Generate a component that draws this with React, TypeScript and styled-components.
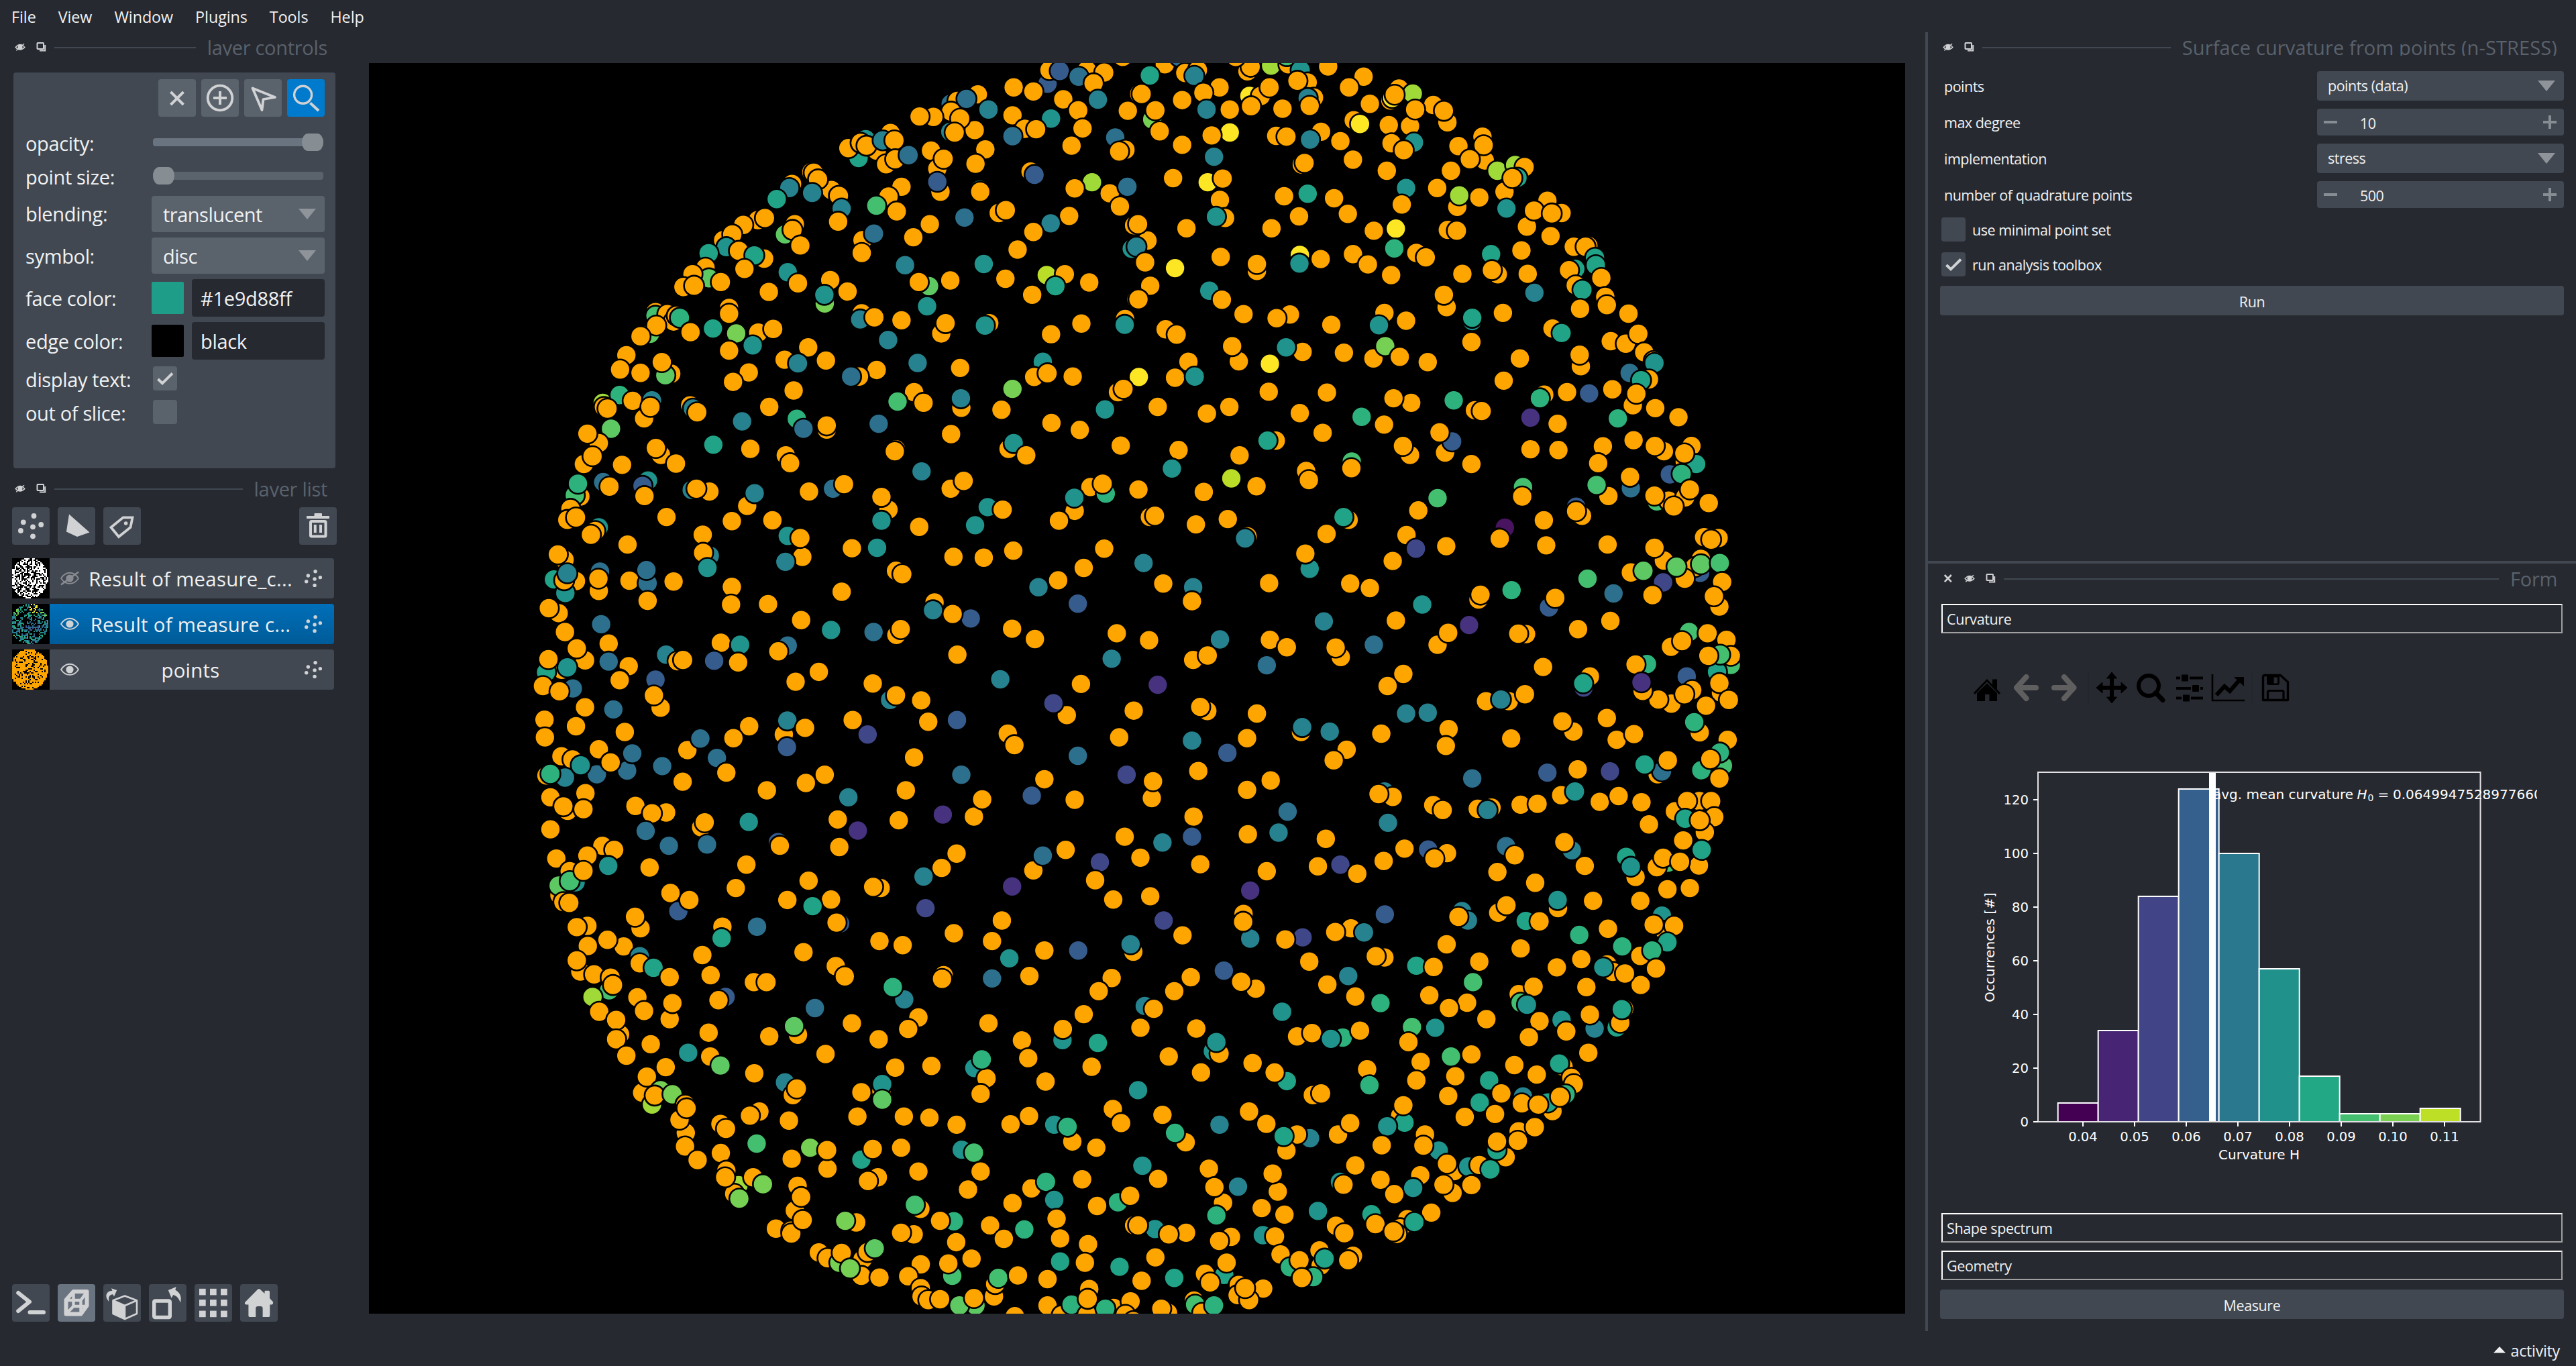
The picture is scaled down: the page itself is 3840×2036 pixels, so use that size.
import React from 'react';
import styled, { createGlobalStyle } from 'styled-components';

const color = {
  background: '#262930',
  foreground: '#414851',
  primary: '#5a626c',
  highlight: '#6a7380',
  secondary: '#868e93',
  text: '#f0f1f2',
  icon: '#d1d2d4',
  current: '#007acc',
};

const GlobalStyle = createGlobalStyle`
  * { box-sizing: border-box; }
  html, body { margin: 0; padding: 0; background: ${color.background}; }
  body { font-family: 'Open Sans', 'Noto Sans', sans-serif; color: ${color.text}; }
  svg { display: block; flex: none; }
`;

/* ---------- window frame ---------- */

const Window = styled.div`
  width: 3840px;
  height: 2036px;
  display: flex;
  flex-direction: column;
  background: ${color.background};
  overflow: hidden;
`;

const MenuBar = styled.nav`
  height: 48px;
  flex: none;
  display: flex;
  align-items: center;
  gap: 33px;
  padding: 2px 0 0 17px;
  font-size: 23.3px;
  letter-spacing: -0.05px;
  line-height: 30px;
`;

const Body = styled.div`
  height: 1936px;
  flex: none;
  display: flex;
`;

const StatusBar = styled.footer`
  flex: 1;
  display: flex;
  justify-content: flex-end;
  align-items: center;
  gap: 8px;
  padding: 6px 24px 0 0;
  font-size: 23.3px;
  letter-spacing: -0.3px;
  line-height: 30px;
`;

const LeftDock = styled.aside`
  width: 550px;
  flex: none;
  display: flex;
  flex-direction: column;
`;

const CanvasArea = styled.main`
  width: 2320px;
  flex: none;
  padding: 46px 30px 26px 0;
`;

const Canvas = styled.div`
  width: 2290px;
  height: 1864px;
  background: #000;
  overflow: hidden;
`;

const RightDock = styled.aside`
  flex: 1;
  border-left: 4px solid ${color.foreground};
  display: flex;
  flex-direction: column;
`;

/* ---------- dock title ---------- */

const TitleBar = styled.div<{ $top: number; $left: number; $right: number }>`
  flex: none;
  height: 24px;
  margin: ${(p) => p.$top}px ${(p) => p.$right}px 0 ${(p) => p.$left}px;
  display: flex;
  align-items: flex-start;
  overflow: hidden;
`;

const TitleIcon = styled.span`
  width: 32px;
  flex: none;
  padding-top: 1px;
`;

const TitleLine = styled.span`
  flex: 1;
  height: 2px;
  margin: 11px 17px 0 -5px;
  background: ${color.foreground};
`;

const TitleText = styled.span<{ $spacing?: number }>`
  font-size: 29px;
  line-height: 40px;
  letter-spacing: ${(p) => p.$spacing ?? -0.3}px;
  margin-top: -8px;
  color: ${color.primary};
  white-space: nowrap;
`;

/* ---------- layer controls ---------- */

const ControlsPanel = styled.section`
  width: 480px;
  height: 590px;
  flex: none;
  margin: 25px 0 0 20px;
  padding: 10px 16px 0 18px;
  border-radius: 4px;
  background: ${color.foreground};
`;

const ModeButtons = styled.div`
  display: flex;
  justify-content: flex-end;
  gap: 8px;
  margin-bottom: 12px;
`;

const IconButton = styled.button<{ $bg?: string }>`
  width: 56px;
  height: 56px;
  padding: 0;
  border: 0;
  border-radius: 4px;
  background: ${(p) => p.$bg ?? color.foreground};
`;

const ControlRow = styled.div<{ $h: number; $gap?: number }>`
  height: ${(p) => p.$h}px;
  margin-top: ${(p) => p.$gap ?? 0}px;
  display: flex;
  align-items: center;
`;

const ControlLabel = styled.label<{ $drop?: number }>`
  width: 188px;
  flex: none;
  padding-top: ${(p) => p.$drop ?? 0}px;
  font-size: 29px;
  line-height: 40px;
  letter-spacing: -0.35px;
  white-space: nowrap;
`;

const Track = styled.div<{ $filled?: boolean }>`
  width: 254px;
  height: 12px;
  margin-left: 2px;
  border-radius: 4px;
  display: flex;
  align-items: center;
  justify-content: ${(p) => (p.$filled ? 'flex-end' : 'flex-start')};
  background: ${(p) => (p.$filled ? color.highlight : color.primary)};
`;

const Handle = styled.span`
  width: 32px;
  height: 26px;
  flex: none;
  border-radius: 9px / 13px;
  background: ${color.secondary};
`;

const Combo = styled.div<{ $small?: boolean }>`
  width: ${(p) => (p.$small ? 368 : 258)}px;
  height: ${(p) => (p.$small ? 44 : 54)}px;
  flex: none;
  padding: ${(p) => (p.$small ? '0 13px 0 16px' : '0 13px 0 17px')};
  display: flex;
  align-items: center;
  justify-content: space-between;
  border-radius: 4px;
  background: ${(p) => (p.$small ? color.foreground : color.primary)};
  font-size: ${(p) => (p.$small ? 21.5 : 29)}px;
  letter-spacing: -0.5px;
`;

const Swatch = styled.span<{ $fill: string }>`
  width: 48px;
  height: 48px;
  flex: none;
  border-radius: 2px;
  background: ${(p) => p.$fill};
`;

const ColorInput = styled.div`
  width: 198px;
  height: 56px;
  margin-left: 12px;
  padding-left: 13px;
  border-radius: 4px;
  background: ${color.background};
  font-size: 29px;
  line-height: 57px;
  letter-spacing: -0.3px;
`;

const CheckBox = styled.span<{ $bg: string; $indent?: number }>`
  width: 36px;
  height: 36px;
  flex: none;
  margin-left: ${(p) => p.$indent ?? 0}px;
  border-radius: 4px;
  background: ${(p) => p.$bg};
`;

/* ---------- layer list ---------- */

const ListButtons = styled.div`
  display: flex;
  gap: 12px;
  margin: 15px 0 0 18px;
  width: 484px;
`;

const Spacer = styled.span`
  flex: 1;
`;

const LayerList = styled.ul`
  list-style: none;
  margin: 20px 0 0 18px;
  padding: 0;
  width: 480px;
  flex: 1;
`;

const LayerRow = styled.li<{ $selected?: boolean }>`
  height: 60px;
  margin-bottom: 8px;
  display: flex;
  align-items: center;
  border-radius: 0 4px 4px 0;
  background: ${(p) => (p.$selected ? 'linear-gradient(#006fb9, #005b98)' : color.foreground)};
`;

const LayerEye = styled.span<{ $dim?: boolean }>`
  width: 60px;
  flex: none;
  padding-left: 16px;
  opacity: ${(p) => (p.$dim ? 0.5 : 1)};
`;

const LayerName = styled.span`
  width: 300px;
  flex: none;
  display: flex;
  justify-content: center;
  font-size: 29.3px;
  line-height: 40px;
  letter-spacing: 0.3px;
  padding-top: 2px;
  margin-right: 2px;
  white-space: nowrap;
`;

const LayerType = styled.span`
  padding-left: 18px;
`;

const ViewerButtons = styled.div`
  display: flex;
  gap: 12px;
  margin: 0 0 14px 18px;
`;

/* ---------- right dock ---------- */

const FormPanel = styled.section`
  height: 753px;
  flex: none;
  padding: 23px 18px 0 18px;
`;

const FormRow = styled.div<{ $h: number; $after?: number }>`
  height: ${(p) => p.$h}px;
  margin-bottom: ${(p) => p.$after ?? 12}px;
  display: flex;
  align-items: center;
  justify-content: space-between;
  padding-left: 6px;
  font-size: 21.5px;
  letter-spacing: -0.5px;
  line-height: 30px;
`;

const FormLabel = styled.label`
  padding-top: 2px;
`;

const CheckRow = styled.label<{ $gap: number }>`
  height: 36px;
  margin-bottom: ${(p) => p.$gap}px;
  padding-left: 2px;
  display: flex;
  align-items: center;
  gap: 10px;
  font-size: 21.5px;
  letter-spacing: -0.45px;
`;

const SpinBox = styled.div`
  width: 368px;
  height: 40px;
  display: flex;
  align-items: center;
  padding: 0 11px 0 10px;
  border-radius: 4px;
  background: ${color.foreground};
`;

const SpinValue = styled.span`
  flex: 1;
  padding: 3px 0 0 34px;
`;

const WideButton = styled.button`
  display: block;
  width: 930px;
  height: 44px;
  padding: 2px 0 0;
  border: 0;
  border-radius: 4px;
  background: ${color.foreground};
  color: ${color.text};
  font: inherit;
  font-size: 21.5px;
  letter-spacing: -0.4px;
`;

const Divider = styled.hr`
  height: 4px;
  flex: none;
  margin: 0;
  border: 0;
  background: ${color.foreground};
`;

const MeasurePanel = styled.section`
  flex: 1;
  display: flex;
  flex-direction: column;
  padding: 25px 18px 0 18px;
`;

const Section = styled.div<{ $after: number }>`
  width: 926px;
  height: 44px;
  flex: none;
  margin: 0 0 ${(p) => p.$after}px 2px;
  padding-left: 6px;
  border: 2px solid;
  border-color: #fff #a0a0a0 #a0a0a0 #fff;
  font-size: 21.5px;
  letter-spacing: -0.4px;
  line-height: 42px;
`;

const PlotTools = styled.div`
  height: 56px;
  flex: none;
  margin: 53px 0 0 42px;
  display: flex;
  gap: 2px;
`;

const ToolSeparator = styled.span`
  width: 2px;
  height: 46px;
  margin: 5px 4px;
  background: #23262c;
`;

const Plot = styled.div`
  height: 755px;
  flex: none;
`;

/* ---------- icons ---------- */

const Box = ({ children }: { children: React.ReactNode }) => (
  <svg width="56" height="56" viewBox="0 0 56 56" fill="none" stroke={color.icon}>
    {children}
  </svg>
);

const HideIcon = () => (
  <svg width="16" height="20" viewBox="0 0 16 20" fill="none" stroke={color.icon} strokeWidth="1.5">
    <path d="M1.2 10.5Q8 2.5 14.8 10.5Q8 17.5 1.2 10.5Z" />
    <circle cx="8" cy="10.3" r="2.8" fill={color.icon} />
    <path d="M2.2 15.2L14 5.2" />
  </svg>
);

const FloatIcon = () => (
  <svg width="16" height="20" viewBox="0 0 16 20" fill="none" stroke={color.icon} strokeWidth="2">
    <rect x="1.5" y="4" width="9.5" height="9" rx="0.8" />
    <path d="M13.2 7V15.6H5" />
  </svg>
);

const CloseIcon = () => (
  <svg width="16" height="20" viewBox="0 0 16 20" fill="none" stroke={color.icon} strokeWidth="2.6">
    <path d="M2.8 5L12.8 15.2M12.8 5L2.8 15.2" />
  </svg>
);

const EyeIcon = ({ slashed }: { slashed?: boolean }) => (
  <svg width="28" height="24" viewBox="0 0 28 24" fill="none" stroke={color.icon} strokeWidth="1.8">
    <path d="M1 12C8 1 20 1 27 12C20 22.6 8 22.6 1 12Z" />
    <circle cx="14" cy="12" r="5.6" fill={color.icon} stroke="none" />
    {slashed && <path d="M1 21.5L27 2.5" strokeWidth="2.6" />}
  </svg>
);

const pointDots = [
  [32.5, 13], [16.8, 22.3], [43.2, 26], [31, 29.3], [12.9, 35], [31, 43.3],
];

const PointsIcon = ({ size = 56 }: { size?: number }) => (
  <svg width={size} height={size} viewBox={size === 56 ? '0 0 56 56' : '9 9 38 38'} fill={color.icon}>
    {pointDots.map(([x, y]) => (
      <circle key={`${x}-${y}`} cx={x} cy={y} r={size === 56 ? 3.9 : 4} />
    ))}
  </svg>
);

const Caret = () => (
  <svg width="26" height="16" viewBox="0 0 26 16" fill="#8f949b">
    <path d="M0 0H26L13 16Z" />
  </svg>
);

const CheckIcon = () => (
  <svg width="36" height="36" viewBox="0 0 36 36" fill="none" stroke={color.icon} strokeWidth="4">
    <path d="M7.5 19L14 25.3L29 10.5" strokeLinejoin="miter" />
  </svg>
);

/* ---------- layer thumbnails ---------- */

const noise = (x: number, y: number, seed: number) => {
  let h = Math.imul(x + 11, 374761393) ^ Math.imul(y + 7, 668265263) ^ Math.imul(seed, 974634721);
  h = Math.imul(h ^ (h >>> 13), 1274126177);
  h = Math.imul(h ^ (h >>> 16), 2246822519);
  return ((h ^ (h >>> 15)) >>> 0) / 4294967296;
};

const coolTones = ['#2c728e', '#21918c', '#28ae80', '#20a386', '#26828e', '#33638d'];

function thumbTone(kind: string, x: number, y: number) {
  if (kind === 'white') return '#fff';
  if (kind === 'orange') return '#ffa500';
  const r = noise(x, y, 9);
  if (y < 8 && x > 12 && x < 19 && r > 0.4) return '#fde725';
  if ((x < 5 || x > 20) && (y < 9 || y > 22) && r > 0.5) return '#7ad151';
  if (y > 12 && y < 20 && x > 7 && x < 20) return r > 0.5 ? '#3b528b' : '#2c728e';
  return coolTones[Math.floor(r * coolTones.length)];
}

const Thumbnail = ({ kind, density, seed }: { kind: string; density: number; seed: number }) => {
  const cells: React.ReactNode[] = [];
  for (let y = 0; y < 30; y += 1) {
    for (let x = 0; x < 28; x += 1) {
      const d = Math.hypot((x - 12.3) / 14, (y - 14.3) / 15);
      const keep = density + (d > 0.8 ? 0.15 : 0);
      if (d < 1 && noise(x, y, seed) < keep) {
        cells.push(
          <rect key={`${x}-${y}`} x={x} y={y} width="1" height="1" fill={thumbTone(kind, x, y)} />,
        );
      }
    }
  }
  return (
    <svg width="56" height="60" viewBox="0 0 28 30" preserveAspectRatio="none" shapeRendering="crispEdges">
      <rect width="28" height="30" fill="#000" />
      {cells}
    </svg>
  );
};

/* ---------- point cloud ---------- */

const tones: Record<string, string> = {
  '0': '#48145f', '1': '#46327e', '2': '#3f4788', '3': '#365c8d', '4': '#2d708e',
  '5': '#26828e', '6': '#20938c', '7': '#20a386', '8': '#2db27d', '9': '#44bf70',
  a: '#5ec962', b: '#75d054', c: '#a0da39', d: '#bade28', y: '#fde725', o: '#ffa500',
};

// Each block of the cloud keeps its own origin; entries are "x,y" plus a tone key,
// listed back to front.
const blocks: { x: number; y: number; data: string }[] = [
  {
    x: 780,
    y: 80,
    data: `1332,73 3 1337,40 o 1363,42 3 1432,40 o 1411,56 4 1476,46 o 1449,72 o 1523,8 o 1246,82 o 1296,92 o 1372,111 o 1460,112 5
1565,98 o 1536,139 o 1410,138 o 1341,158 6 1421,182 o 1393,224 o 1243,150 o 1274,183 o 1303,184 o 1243,201 4 1504,204 4 1530,234 o 1514,238 o
1086,122 4 1103,115 o 1155,99 o 1126,110 4 1182,136 5 1087,141 o 1085,190 5 1147,186 o 1110,158 o 1096,192 o 1042,154 o 1007,153 o 1174,233 o 1036,236 o
1052,280 o 1068,256 o 1149,268 o 1060,336 o 1052,312 3 870,208 6 852,254 7 933,193 o 898,236 o 826,230 o 857,217 o 872,224 o 913,211 5 943,211 o
922,269 o 945,257 o 979,247 4 1289,287 o 1299,295 3 1160,331 6 1161,336 o 1445,313 c 1401,328 o 1490,340 o 1535,324 4 1516,372 o
961,324 o 928,348 o 949,384 o 897,370 9 1033,415 o 991,447 o 1121,399 4 1208,388 o 1226,381 o 1387,395 o 1340,413 5 1296,434 o 1256,477 o 1552,418 o 1546,475 6 1580,508 o
732,288 o 738,290 o 783,332 o 749,306 o 683,317 o 676,327 5 644,354 7 734,339 5 802,346 o 809,377 5 800,409 o 596,405 o 614,400 o 559,417 o 508,454 o 531,440 o
516,471 6 471,486 7 665,440 a 690,415 o 684,429 o 704,467 o 548,480 o 612,499 o 587,491 7 562,524 o 862,454 o 860,485 o 891,438 4
463,521 o 472,547 a 502,556 o 430,537 o 407,568 o 434,565 o 672,532 6 698,559 o 624,580 o 780,551 o 766,608 b 765,587 6 824,579 o
970,515 5 1170,512 6 1031,566 a 1005,556 o 1085,552 o 1225,548 o 1330,539 d 1376,537 o 1352,566 7 1438,557 o 1293,587 o 1026,615 6 1558,598 o
860,632 o 856,647 5 892,642 o 961,649 o 1062,681 o 1073,656 o 927,697 5 1184,656 o 1173,662 6 1418,657 o 1529,646 o 1528,660 6 1341,683 o
336,629 o 336,638 9 366,634 o 382,652 o 390,638 o 398,643 8 322,682 a 338,662 o 298,688 o 425,678 o 523,619 o 523,633 o 482,669 7 597,679 o 541,681 b 635,670 o 583,710 6
523,723 o 724,715 o 664,745 o 698,754 5 769,747 o 262,734 o 246,769 o 298,777 o 376,779 o 361,783 a 352,751 o 573,776 o 533,799 o 687,820 o
1002,753 5 1110,765 o 898,770 o 853,786 o 833,786 4 1320,750 6 1298,787 o 1332,778 o 1396,786 o 1564,787 y 1511,824 o 1525,816 o 1243,816 b 1215,867 o
993,824 o 1017,850 o 951,847 9 1113,862 o 1112,839 5 1478,866 6 202,850 c 205,860 o 245,831 8 278,845 o 214,864 o 327,844 5 307,888 o 323,860 o
424,856 o 431,864 5 442,873 o 625,860 o 556,895 5 695,889 8 712,913 4 771,915 o 771,905 o 903,901 4 1087,926 o 1342,899 o 1414,916 o 223,913 a
192,948 o 163,925 o 154,999 o 176,980 o 251,1001 o 350,977 o 337,960 o 388,998 o 483,952 7 577,962 o 667,978 o 678,997 o 947,963 o 944,968 o
1233,962 o 1246,948 6 1278,978 o 1518,954 o 1012,1017 5 203,1043 4 219,1054 o 317,1039 6 303,1052 3 308,1077 o 145,1078 o 131,1075 9 139,1047 8
120,1108 o 112,1135 o 134,1129 o 192,1153 6 183,1162 o 172,1171 o 428,1062 5 473,1066 o 440,1059 o 569,1101 o 588,1070 5 726,1066 o 787,1059 4 815,1048 o
364,1128 o 530,1138 o 633,1136 o 928,1110 o 910,1079 o 910,1137 6 1086,1059 o 1119,1040 o 1006,1152 o 1180,1104 6 1218,1110 o 1148,1148 6 1441,1055 o
1480,1071 8 1472,1047 o 1401,1113 o 1400,1081 6 1361,1137 o 1563,1061 o 265,1195 o 474,1222 5 456,1171 o 457,1215 o 468,1252 6 672,1174 6 709,1225 o 704,1179 o
666,1237 5 835,1204 o 899,1203 6 1093,1225 o 1170,1227 o 1245,1210 o 1476,1205 o 1424,1252 o 105,1232 o 88,1219 o 78,1280 7 134,1284 o 107,1313 6 104,1282 o 112,1265 5
195,1261 4 192,1308 o 191,1278 o 270,1283 o 316,1289 4 313,1257 4 382,1285 o 316,1332 o 530,1298 o 528,1341 o 622,1340 o 947,1259 o 963,1267 o 809,1310 o
1359,1282 o 1309,1299 5 1409,1339 3 1576,1240 5 90,1362 o 65,1350 o 198,1389 4 106,1408 o 706,1379 o 782,1403 6 890,1408 4 948,1415 o 959,1401 o
1045,1336 o 1041,1355 5 1137,1375 3 1091,1364 o 1242,1400 o 1508,1411 o 1300,1425 o 217,1436 o 157,1477 o 136,1448 o 502,1434 o 551,1439 6 672,1441 4 648,1455 o
363,1463 5 392,1479 o 406,1476 o 485,1478 3 546,1482 o 1103,1463 o 1495,1473 5 217,1480 4 268,1491 o 244,1523 o 98,1500 o 58,1506 7 64,1474 o 112,1494 6
751,1505 o 692,1529 o 336,1524 3 1212,1523 5`,
  },
  {
    x: 1700,
    y: 80,
    data: `62,26 o 99,8 4 24,53 7 114,47 o 146,40 o 137,54 5 3,98 o 106,113 o 201,82 o 160,95 o 168,136 5 227,136 o 272,43 o 280,32 o 242,8 o 332,29 c
376,26 o 372,6 9 407,40 6 477,31 o 425,70 o 399,66 o 277,103 y 306,103 o 328,82 o 281,128 o 361,134 o 441,107 o 425,108 5 430,127 o 567,56 o 530,82 o 583,122 o
30,160 b 38,138 o 49,189 o 227,192 y 181,199 o 106,222 o 187,251 5 345,200 o 371,202 o 459,190 o 431,209 5 508,213 o 540,258 o 542,162 o 558,171 y
657,85 o 692,97 c 635,114 o 640,108 y 646,100 o 744,125 o 780,167 o 771,139 o 685,176 o 698,136 o 631,174 o 638,218 o 695,216 6 669,235 o 626,285 o
869,202 o 808,225 o 875,260 o 872,223 o 837,257 o 789,285 o 410,270 o 417,266 o 425,341 7 365,347 o 83,303 o 171,313 y 209,304 o 202,356 o 215,400 o 192,397 6
492,352 o 527,390 o 403,396 o 333,425 o 675,327 6 664,367 o 754,327 o 907,285 c 952,271 c 976,276 o 958,302 7 925,336 o 945,303 o 861,350 o 805,373 o 810,345 c
930,377 6 117,425 o 18,455 o -6,415 o -10,470 5 12,508 o 204,495 o 25,565 o -5,598 o 88,522 y 593,431 o 649,426 y 781,429 o 804,431 o 982,421 o 1034,358 o 1070,388 o 1000,382 o
1045,389 o 1042,444 o 968,479 o 645,474 8 701,485 o 725,496 o 540,488 o 578,513 o 405,490 y 404,511 6 458,500 o 296,529 o 296,512 o 637,539 o 818,536 o
891,488 7 908,537 o 893,527 o 984,536 o 1001,582 5 1101,470 o 1138,468 o 1131,470 o 1155,497 7 1157,515 7 1105,524 7 1089,527 o 1171,546 o 1106,564 o 1123,575 7
1181,592 o 1185,612 o 1117,621 o 1240,633 o 175,577 6 207,599 o 262,634 o 380,635 o 346,644 o 485,660 o 620,631 o 675,650 o 606,661 6 778,617 o 771,587 o
921,631 o 843,651 6 843,643 7 841,702 o 1047,669 o 1070,680 7 64,671 o 92,684 o 250,749 o 233,712 o 412,726 o 370,715 6 329,755 y 517,728 o 592,742 o 622,712 b 659,738 o
730,751 o 964,742 o 923,796 o 1119,761 o 1116,733 o 1195,700 o 1233,706 o 1265,682 o 1280,727 o 1304,748 o 1306,753 6 122,750 o 88,789 o 138,786 6 326,823 o 474,825 o
1243,777 4 1292,793 o 1272,795 7 1199,817 o 1140,827 3 1084,824 o 1026,830 o 1015,839 8 1251,856 o 1260,828 o 1308,863 o 1367,885 o 1213,888 8 688,850 o 643,839 o 796,844 8
44,860 o 226,860 o 169,876 o 405,875 o 562,884 8 619,903 o 850,868 o 867,870 o 991,886 1 1060,901 o 463,923 o 344,942 o 323,942 7 97,965 o 252,978 o 685,977 o 667,955 o
774,971 o 792,944 3 760,922 o 991,963 o 1062,965 o 1175,956 o 1253,941 o 1330,968 o 1307,955 o 1400,955 o 1383,993 o 1412,999 7 1382,973 o 1163,997 o 841,999 o
80,1010 6 231,1034 d 421,1016 o 428,1038 o 537,993 9 536,1009 o 295,1053 o 161,1067 o -5,1061 o 972,1055 9 970,1078 o 1189,1077 o 1159,1050 9 1246,1058 4 1244,1030 o
1345,1024 3 1375,1023 8 1312,1090 9 1342,1088 o 1384,1080 o 1396,1061 o 1306,1076 o 1355,1102 o 1444,1094 o 755,1082 9 706,1112 o 24,1128 o 37,1125 o 222,1133 o 141,1146 o
529,1135 o 516,1128 7 272,1175 o 266,1180 5 473,1169 o 1107,1103 3 1122,1125 o 1107,1114 o 1025,1136 o 926,1154 0 910,1180 o 913,1181 o 1031,1197 o 1187,1195 o
1432,1177 o 1469,1179 o 1450,1183 o 1330,1234 o 1306,1203 o 676,1172 o 700,1205 2 777,1199 o 641,1235 o 430,1254 6 419,1217 o 1246,1263 o 1278,1259 a 1424,1230 o 1422,1264 3 1408,1250 o
1424,1243 a 1383,1278 o 1362,1249 a 1472,1240 9 1478,1286 o 1136,1278 9 1328,1287 2 1471,1346 o 1457,1321 o 1301,1318 o 1202,1314 4 58,1290 o 134,1299 5 131,1333 o 327,1289 o
533,1290 o 583,1301 o 943,1306 8 859,1329 o 864,1317 o 716,1341 6 1038,1348 3 1054,1325 o 1194,1381 o 1112,1401 o 649,1380 o 466,1382 5 835,1391 1 755,1439 o 782,1410 o
980,1413 o 960,1412 o 593,1439 4 22,1428 o 202,1426 5 329,1427 o 372,1445 o 134,1476 o 171,1465 o 321,1489 4 509,1469 o 496,1446 o 1394,1408 9 1348,1444 o 1376,1430 o 1441,1411 o 1489,1427 o
1500,1488 9 1465,1505 7 1500,1466 o 1473,1463 9 1443,1466 o 1287,1486 8 1277,1546 o 1273,1530 1 1258,1487 o 1388,1516 3 1142,1516 o 1126,1543 2 1125,1533 7 1023,1493 o 668,1510 o`,
  },
  {
    x: 780,
    y: 1020,
    data: `126,10 4 50,4 o 92,17 o 349,57 o 332,27 o 157,56 o 229,61 4 54,86 o 134,102 o 55,129 o 258,116 o 888,-2 o 245,-10 o 932,38 5 947,27 o 1011,39 o 1029,91 o 1102,87 3 1417,-1 o
1381,75 o 1347,46 2 1551,64 o 1514,129 o 1231,120 o 1248,148 o 1409,174 4 837,87 o 875,122 2 993,178 o 574,102 o 534,131 o 417,160 o 450,132 4 662,122 o 671,88 5 670,153 3 716,106 o
97,175 o 125,183 o 192,158 o 59,222 o 106,227 5 69,218 8 187,219 4 146,197 6 264,210 4 277,168 4 222,190 o 353,199 4 405,237 o 492,179 4 516,215 o 619,258 o 718,240 o 766,220 o
1113,220 4 1324,231 o 1292,271 3 1401,281 o 1533,220 2 158,265 o 69,275 o 113,308 o 102,297 o 153,304 o 285,296 o 363,312 o 327,314 o 311,357 4 69,353 o 452,348 o 461,336 o
573,335 6 467,390 4 370,393 4 647,384 3 652,393 o 826,275 5 799,329 o 850,356 1 803,396 o 972,258 o 954,331 o 1066,317 1 1145,322 o 1166,280 o 1528,371 o 1569,422 o 1378,403 o
201,393 o 163,417 o 231,403 o 216,442 6 84,424 o 321,446 o 118,455 o 133,482 6 92,513 o 90,490 a 118,479 9 153,454 o 102,530 o 117,532 o 567,439 o 540,496 o 374,508 o 394,552 3 422,525 o
725,478 o 671,525 o 782,524 o 735,540 7 908,496 o 889,493 o 1101,412 o 1063,447 o 1017,468 5 1022,545 2 1242,492 1 1296,453 o 1320,417 4 1465,433 2 1453,477 o 1499,524 o
163,588 o 136,591 o 298,594 o 284,566 o 164,637 o 255,638 o 214,622 o 506,590 o 504,618 7 594,590 4 805,582 3 796,580 o 905,625 o 964,635 o 1094,606 o 1216,575 o 1191,625 o
1235,667 6 1324,648 o 1410,648 3 1550,651 o 1543,633 5 145,699 o 136,672 o 296,662 5 296,679 o 331,690 7 455,659 o 372,713 o 476,708 o 712,652 o 794,686 o 817,711 o
180,706 o 222,714 o 218,745 9 228,732 o 176,761 c 290,762 o 307,795 o 193,797 o 372,815 o 379,776 o 586,725 o 618,725 o 514,761 3 496,769 o 741,788 4 968,767 5 939,737 8
1068,708 o 1064,717 o 1191,716 4 1286,710 o 1495,715 o 1462,747 o 1424,803 o 246,852 o 236,817 o 236,864 o 324,876 o 262,904 o 471,848 o 419,897 6 475,906 o 501,928 a
625,857 o 698,853 o 688,832 a 835,825 o 768,900 o 1004,811 o 978,839 o 903,864 o 1182,825 o 1267,867 o 1370,866 6 1371,839 o 1460,873 7 1568,835 o 1283,910 o 1444,931 o
362,932 o 302,994 o 314,955 o 349,988 b 327,1023 c 334,1001 o 379,998 b 413,1092 o 397,1060 o 412,1023 o 415,1032 o 587,947 o 665,969 5 685,1000 o 695,984 o 945,933 o 1037,929 o
1146,934 6 1177,959 o 1165,913 8 1162,997 o 1327,967 o 859,993 o 910,990 o 912,973 6 912,1011 a 849,1052 o 967,1052 o 1032,1055 o 1101,1072 o 1238,1071 o 1285,1051 o
1498,1034 o 1519,1068 o 1349,1072 6 1395,1113 o 1383,1077 8 1456,1128 o 600,1040 o 576,1050 o 675,1062 o 501,1070 o 515,1082 o 411,1125 o 443,1158 o 502,1141 o
593,1118 9 729,1128 b 682,1155 o 773,1179 o 772,1134 o 859,1157 7 888,1131 o 960,1128 o 901,1200 o 876,1209 o 1004,1186 o 1118,1132 7 1114,1133 6 1145,1140 9 1162,1186 o 1130,1230 o
516,1184 o 547,1219 c 584,1200 o 536,1240 o 513,1200 o 549,1252 b 609,1217 b 697,1221 o 690,1281 o 706,1248 o 642,1325 o 681,1330 o 681,1337 o 710,1304 o
846,1310 o 818,1306 b 1009,1277 o 995,1267 9 1094,1307 8 1059,1306 o 992,1339 o 960,1335 o 1100,1358 o 1186,1317 o 1221,1350 o 1273,1327 8 1243,1263 o 1291,1227 o 1328,1211 8
1349,1255 6 1420,1205 o 1458,1270 o 1511,1261 8 1542,1245 o 1355,1301 o 1364,1349 o 1435,1363 o 1552,1317 o 1427,1408 o 1364,1405 7 1515,1418 7
751,1383 o 773,1397 o 803,1408 b 809,1384 o 862,1400 o 875,1382 o 893,1373 a 859,1440 o 830,1422 b 905,1444 o 1010,1412 o 978,1441 o 1090,1440 9 1080,1410 o 1139,1398 o
1010,1470 o 1012,1490 o 1029,1499 o 1059,1497 o 1196,1490 o 1199,1460 o 1207,1445 9 1257,1439 o 1332,1448 o 1149,1512 a 1108,1512 a 1145,1494 o 1332,1512 o 1368,1536 o
1393,1510 8 1433,1535 o 1438,1472 o 1434,1496 o 1249,1538 o 1500,1518 o 1479,1520 8 1543,1502 o 1530,1535 o 1550,1550 o 1572,1452 o`,
  },
  {
    x: 1700,
    y: 1020,
    data: `44,1 1 170,65 o 152,55 o 296,71 o 271,131 o 131,137 5 221,167 3 147,211 o 408,116 o 411,104 5 481,115 5 524,159 o 491,185 o 612,120 o 675,71 5 730,69 5 783,109 o 776,150 o 628,4 o
878,41 o 936,41 o 977,24 o 916,37 5 942,132 o 1100,115 o 1072,90 o 1185,82 o 1210,135 o 1254,121 o 1349,47 o 1316,37 o 1402,14 o 1382,24 o 1475,20 o 1471,-3 o 1495,38 o 1437,52 o 1276,16 o 1273,-5 1
1421,117 o 1407,92 8 1492,135 o 1480,198 9 1472,166 8 1425,209 8 1448,182 o 1471,229 o 1314,219 o 1325,212 4 1340,185 o 1281,195 7 1193,212 2 1111,207 o 1034,215 3 843,229 4
29,277 o 32,236 o 331,234 o 271,257 o 374,310 4 135,322 o 620,261 5 641,274 o 605,267 o 744,294 o 768,306 o 629,337 5 857,303 o 892,300 o 882,306 5 966,293 o 1009,291 o 1069,270 o 1104,261 6
1167,286 o 1215,272 o 1273,287 o 1358,309 o 1420,284 o 1389,284 o 1384,327 7 1450,284 o 1458,323 o 1434,360 o 1421,331 o 1292,341 o 56,385 5 131,371 3 351,361 5 273,365 o 471,376 o
1379,380 o 1419,441 o 1426,403 7 1340,434 9 1312,445 o 1328,422 o 1371,432 o 1339,499 o 1396,496 o 0,422 o 152,438 o 321,455 o 451,443 o 508,439 2 551,461 o 618,430 o 671,400 o 731,402 3 779,411 o 747,424 o
929,394 4 951,416 o 907,457 o 1096,404 5 1077,384 o 1129,442 o 1234,420 7 1258,469 o 1246,444 6 1003,483 o 1150,527 o 1270,527 o 25,516 o 279,502 1 59,575 2 262,559 o 279,619 5 261,578 o 107,611 o
621,560 3 535,594 o 495,603 o 568,604 5 412,616 2 368,621 o 817,552 5 832,575 5 808,566 o 909,556 o 930,538 o 1061,545 o 1060,525 6 979,576 7 1014,577 o 1115,610 8 1188,595 o
1325,563 6 1332,600 o 1304,585 o 1356,588 o 1339,628 7 1224,638 8 1270,661 o 1300,648 8 1310,692 o 1271,732 o 966,643 o 778,633 o 620,665 o 598,662 o 429,675 o 212,697 3 128,713 o 86,747 o
293,741 o 256,724 o 475,731 o 528,710 5 546,760 o 701,685 7 745,688 o 861,675 o 845,725 9 1058,689 o 1120,669 o 1186,682 o 1200,700 o 1176,689 6 1231,704 o 1133,737 o
11,783 5 34,790 o 360,797 6 610,776 8 734,757 o 830,775 o 784,788 o 879,815 o 961,754 o 966,775 9 999,736 o 982,780 6 1014,820 o 1070,817 6 1082,845 o 1154,838 5 1142,804 o 1210,835 7 1219,824 o 1229,790 o 1223,791 7
0,836 o 142,838 o 72,906 o 184,893 6 201,899 o 193,871 6 154,945 o 398,857 o 436,849 o 514,860 8 484,863 6 558,843 o 690,834 9 681,871 o 749,836 6 789,906 9 841,901 o 712,919 o 701,964 o
987,859 o 1138,897 o 285,922 o 372,966 7 341,945 o 438,1000 o 459,996 o 576,937 o 582,976 8 800,954 o 782,1002 o 886,964 7 950,927 o 1007,950 o 1075,931 o 1064,923 7 1095,958 o 1101,973 o
-6,988 6 56,1048 o 276,1040 o 320,1070 o 201,1072 5 115,1115 o 88,1092 8 431,1105 5 398,1096 o 371,1135 o 364,1100 7 502,1096 o 533,1068 o 660,1050 o 671,1067 7 668,1025 o 627,1076 6
824,1053 o 862,1018 7 917,996 o 901,1046 o 972,1003 5 969,1020 o 1047,1039 o 1035,1018 7 1011,1023 o 1080,998 8 1066,1004 o 961,1088 o 1002,1078 o 613,1122 o 723,1096 o 758,1135 6 719,1123 o
928,1151 o 905,1134 7 959,1111 o 906,1113 o 546,1171 o 507,1211 6 516,1218 o 797,1185 o 779,1167 o 833,1174 6 861,1170 o 889,1181 7 841,1219 o 793,1238 o 770,1218 o
5,1172 6 45,1204 o 174,1179 o 210,1262 o 188,1224 o 193,1293 8 248,1223 5 349,1235 o 336,1191 o 308,1275 o 366,1291 o 610,1206 o 645,1241 o 711,1195 o 693,1226 6 739,1286 o
451,1282 6 587,1290 7 597,1314 o 678,1302 o 660,1324 o 652,1338 o 643,1332 o 696,1309 7 497,1318 o 518,1336 o 37,1326 6 116,1335 o 72,1339 o 230,1345 o 200,1355 o 311,1341 6 342,1344 o
-6,1317 o 38,1395 o 356,1388 o 540,1391 o 528,1402 o 455,1378 o 458,1415 o 468,1398 7 380,1419 8 439,1443 8 404,1402 o 410,1445 o 86,1445 7 164,1435 o 213,1438 7 219,1408 o 177,1456 o
3,1452 o 312,1471 o 250,1462 o 247,1487 o 276,1499 o 266,1470 o 136,1500 o 139,1510 9 157,1530 o 187,1512 8 70,1530 o 53,1520 o`,
  },
];

const BLOCK_W = 920 / 1568;
const BLOCK_H = 960 / 1568;

const PointCloud = () => (
  <svg width="2290" height="1864" viewBox="550 94 2290 1864" stroke="#000" strokeWidth="2.6">
    {blocks.flatMap((block, bi) =>
      Array.from(block.data.matchAll(/(-?\d+),(-?\d+) (\w)/g)).map((m, i) => (
        <circle
          key={`${bi}-${i}`}
          cx={block.x + Number(m[1]) * BLOCK_W}
          cy={block.y + Number(m[2]) * BLOCK_H}
          r="15"
          fill={tones[m[3]]}
        />
      )),
    )}
  </svg>
);

/* ---------- histogram ---------- */

const counts = [7, 34, 84, 124, 100, 57, 17, 3, 3, 5];
const barFill = [
  '#440154', '#482475', '#414487', '#355f8d', '#2a788e',
  '#21918c', '#22a884', '#44bf70', '#7ad151', '#bddf26',
];

const Histogram = () => {
  const base = 1672;
  return (
    <svg width="930" height="755" viewBox="2892 1053 930 755" fontFamily="'DejaVu Sans', sans-serif" fontSize="20" fill="#fff">
      <defs>
        <clipPath id="figure">
          <rect x="2942" y="1060" width="840" height="740" />
        </clipPath>
      </defs>
      {counts.map((n, i) => (
        <rect
          key={barFill[i]}
          x={3067.7 + i * 60}
          y={base - n * 4}
          width="60"
          height={n * 4}
          fill={barFill[i]}
          stroke="#fff"
          strokeWidth="2"
        />
      ))}
      <rect x="3293" y="1151" width="10" height="521" />
      <rect x="3038" y="1151" width="659.5" height="521" fill="none" stroke="#e2e0e5" strokeWidth="2" />
      {[0, 20, 40, 60, 80, 100, 120].map((v) => (
        <g key={v}>
          <path d={`M3031 ${base - v * 4}H3038`} stroke="#fff" strokeWidth="2" />
          <text x="3024" y={base + 7 - v * 4} fontSize="19.6" textAnchor="end">{v}</text>
        </g>
      ))}
      {[4, 5, 6, 7, 8, 9, 10, 11].map((v) => (
        <g key={v}>
          <path d={`M${3105 + (v - 4) * 77} 1672V1679`} stroke="#fff" strokeWidth="2" />
          <text x={3105 + (v - 4) * 77} y="1701" fontSize="19.6" textAnchor="middle">{(v / 100).toFixed(2)}</text>
        </g>
      ))}
      <text x="3367.5" y="1727.5" textAnchor="middle">Curvature H</text>
      <text transform="translate(2973 1412) rotate(-90)" textAnchor="middle">Occurrences [#]</text>
      <g clipPath="url(#figure)">
        <text x="3299" y="1190.5">avg. mean curvature</text>
        <text x="3513.5" y="1190.5" fontStyle="italic">H</text>
        <text x="3529.5" y="1194" fontSize="14">0</text>
        <text x="3544.5" y="1190.5">=</text>
        <text x="3567" y="1190.5">0.0649947528977660</text>
      </g>
    </svg>
  );
};

/* ---------- parts ---------- */

const Title = ({ text, top, left, right, closable, spacing }: {
  text: string; top: number; left: number; right: number; closable?: boolean; spacing?: number;
}) => (
  <TitleBar $top={top} $left={left} $right={right}>
    {closable && <TitleIcon><CloseIcon /></TitleIcon>}
    <TitleIcon><HideIcon /></TitleIcon>
    <TitleIcon><FloatIcon /></TitleIcon>
    <TitleLine />
    <TitleText $spacing={spacing}>{text}</TitleText>
  </TitleBar>
);

const Spin = ({ value }: { value: number }) => (
  <SpinBox>
    <svg width="20" height="20" viewBox="0 0 20 20" fill={color.secondary}><rect y="8" width="20" height="4" /></svg>
    <SpinValue>{value}</SpinValue>
    <svg width="20" height="20" viewBox="0 0 20 20" fill={color.secondary}>
      <rect y="8" width="20" height="4" /><rect x="8" width="4" height="20" />
    </svg>
  </SpinBox>
);

export default function App() {
  return (
    <Window>
      <GlobalStyle />
      <MenuBar>
        {['File', 'View', 'Window', 'Plugins', 'Tools', 'Help'].map((m) => <span key={m}>{m}</span>)}
      </MenuBar>
      <Body>
        <LeftDock>
          <Title text="layer controls" top={11} left={22} right={62} />
          <ControlsPanel>
            <ModeButtons>
              <IconButton $bg={color.primary}>
                <Box><path d="M18.5 19L37.5 38M37.5 19L18.5 38" strokeWidth="4" /></Box>
              </IconButton>
              <IconButton $bg={color.primary}>
                <Box>
                  <circle cx="28" cy="28" r="18.3" strokeWidth="3.8" />
                  <path d="M18 28H38M28 18V38" strokeWidth="4" />
                </Box>
              </IconButton>
              <IconButton $bg={color.primary}>
                <Box><path d="M12.5 13.5L46 27L28.5 30L26.5 46Z" strokeWidth="3.8" strokeLinejoin="round" /></Box>
              </IconButton>
              <IconButton $bg={color.current}>
                <Box>
                  <circle cx="23.6" cy="23.3" r="13" strokeWidth="3.4" />
                  <path d="M34.5 35.5L47 47" strokeWidth="4" />
                </Box>
              </IconButton>
            </ModeButtons>
            <ControlRow $h={52}>
              <ControlLabel $drop={4}>opacity:</ControlLabel>
              <Track $filled><Handle /></Track>
            </ControlRow>
            <ControlRow $h={48}>
              <ControlLabel $drop={4}>point size:</ControlLabel>
              <Track><Handle /></Track>
            </ControlRow>
            <ControlRow $h={54} $gap={6}>
              <ControlLabel>blending:</ControlLabel>
              <Combo>translucent<Caret /></Combo>
            </ControlRow>
            <ControlRow $h={54} $gap={8}>
              <ControlLabel $drop={1}>symbol:</ControlLabel>
              <Combo>disc<Caret /></Combo>
            </ControlRow>
            <ControlRow $h={56} $gap={8}>
              <ControlLabel $drop={1}>face color:</ControlLabel>
              <Swatch $fill="#1e9d88" />
              <ColorInput>#1e9d88ff</ColorInput>
            </ControlRow>
            <ControlRow $h={56} $gap={8}>
              <ControlLabel $drop={1}>edge color:</ControlLabel>
              <Swatch $fill="#000" />
              <ColorInput>black</ColorInput>
            </ControlRow>
            <ControlRow $h={50} $gap={3}>
              <ControlLabel $drop={4}>display text:</ControlLabel>
              <CheckBox $bg={color.primary} $indent={2}><CheckIcon /></CheckBox>
            </ControlRow>
            <ControlRow $h={50}>
              <ControlLabel $drop={3}>out of slice:</ControlLabel>
              <CheckBox $bg={color.primary} $indent={2} />
            </ControlRow>
          </ControlsPanel>
          <Title text="layer list" top={19} left={22} right={62} />
          <ListButtons>
            <IconButton><PointsIcon /></IconButton>
            <IconButton>
              <Box><path d="M17 10.5L47.5 37.5L29 44L12.9 36.5Z" fill={color.icon} stroke="none" /></Box>
            </IconButton>
            <IconButton>
              <Box>
                <path d="M29.5 15.3H43.5L40.5 30L23 44L11.5 30Z" strokeWidth="3.8" />
                <circle cx="33.6" cy="24" r="2.8" fill={color.icon} stroke="none" />
              </Box>
            </IconButton>
            <Spacer />
            <IconButton>
              <Box>
                <g fill={color.icon} stroke="none">
                  <rect x="11" y="13" width="34" height="4" /><rect x="22.5" y="9" width="11.5" height="5" rx="1" />
                  <rect x="21.8" y="26" width="4" height="12" /><rect x="30" y="26" width="4" height="12" />
                </g>
                <rect x="17" y="21" width="22.5" height="22.5" rx="1.5" strokeWidth="4" />
              </Box>
            </IconButton>
          </ListButtons>
          <LayerList>
            <LayerRow>
              <Thumbnail kind="white" density={0.5} seed={3} />
              <LayerEye $dim><EyeIcon slashed /></LayerEye>
              <LayerName>Result of measure_c...</LayerName>
              <LayerType><PointsIcon size={26} /></LayerType>
            </LayerRow>
            <LayerRow $selected>
              <Thumbnail kind="viridis" density={0.42} seed={5} />
              <LayerEye><EyeIcon /></LayerEye>
              <LayerName>Result of measure c...</LayerName>
              <LayerType><PointsIcon size={26} /></LayerType>
            </LayerRow>
            <LayerRow>
              <Thumbnail kind="orange" density={0.76} seed={7} />
              <LayerEye><EyeIcon /></LayerEye>
              <LayerName>points</LayerName>
              <LayerType><PointsIcon size={26} /></LayerType>
            </LayerRow>
          </LayerList>
          <ViewerButtons>
            <IconButton>
              <Box>
                <path d="M9.2 13L26 26.3L9.2 40M26.5 42H47" strokeWidth="6" strokeLinecap="round" strokeLinejoin="round" />
              </Box>
            </IconButton>
            <IconButton $bg={color.highlight}>
              <Box>
                <path d="M23.5 11H43.5V32L34.5 44.5H12.5V23.5Z" strokeWidth="6" strokeLinejoin="round" />
                <path d="M23.5 11V33H43M12.5 24H34.5V44M34.5 24L43 12M13 44L23.5 33" strokeWidth="4.4" />
              </Box>
            </IconButton>
            <IconButton>
              <Box>
                <path d="M32 17.5L50 24.3V44L32 52L14.5 44V24.3Z M14.5 24.3L32 32L50 24.3M32 32V52" strokeWidth="2.6" strokeLinejoin="round" />
                <path d="M14.5 25L32 32V52L14.5 44Z" fill={color.icon} />
                <path d="M8.5 26C1.5 18 4 10.5 13.4 9.7L12 6.3L20.2 9L16 18.6L14.4 15.3C9 15.8 7.2 19 8.5 26Z" fill={color.icon} stroke="none" />
              </Box>
            </IconButton>
            <IconButton>
              <Box>
                <rect x="7.7" y="25" width="23.6" height="24.5" rx="1.5" strokeWidth="5.4" />
                <path d="M28.8 9L40.6 4L39.3 8.6C46 12.5 49.5 19 46.8 27.5C44.8 21 41.5 17.5 36.2 16L33.6 20.7Z" fill={color.icon} stroke="none" />
              </Box>
            </IconButton>
            <IconButton>
              <Box>
                <g fill={color.icon} stroke="none">
                  {[7, 23, 39].map((x) => [6.8, 23, 39.6].map((y) => (
                    <rect key={`${x}-${y}`} x={x} y={y} width="9.7" height="9.6" />
                  )))}
                </g>
              </Box>
            </IconButton>
            <IconButton>
              <Box>
                <path
                  d="M28 7Q29 7 30 8L36.5 14V11Q36.5 9.8 38 9.8H42.5Q44 9.8 44 11.5V21L49 26.5Q49.6 30 47 30.5H44.3V47Q44.3 49 42.5 49H33.6V36Q33.6 33 30.5 33H26.5Q23.2 33 23.2 36V49H14.3Q12.4 49 12.4 47V30.5H9Q6 30 7.2 27L26 8Q27 7 28 7Z"
                  fill={color.icon}
                  stroke="none"
                />
              </Box>
            </IconButton>
          </ViewerButtons>
        </LeftDock>

        <CanvasArea>
          <Canvas><PointCloud /></Canvas>
        </CanvasArea>

        <RightDock>
          <Title text="Surface curvature from points (n-STRESS)" top={11} left={22} right={28} spacing={0.12} />
          <FormPanel>
            <FormRow $h={44}><FormLabel>points</FormLabel><Combo $small>points (data)<Caret /></Combo></FormRow>
            <FormRow $h={40}><FormLabel>max degree</FormLabel><Spin value={10} /></FormRow>
            <FormRow $h={44}><FormLabel>implementation</FormLabel><Combo $small>stress<Caret /></Combo></FormRow>
            <FormRow $h={40} $after={14}><FormLabel>number of quadrature points</FormLabel><Spin value={500} /></FormRow>
            <CheckRow $gap={16}><CheckBox $bg={color.foreground} />use minimal point set</CheckRow>
            <CheckRow $gap={14}><CheckBox $bg={color.foreground}><CheckIcon /></CheckBox>run analysis toolbox</CheckRow>
            <WideButton>Run</WideButton>
          </FormPanel>
          <Divider />
          <Title text="Form" top={11} left={22} right={28} closable />
          <MeasurePanel>
            <Section $after={0}>Curvature</Section>
            <PlotTools>
              <Box>
                <g fill="#000" stroke="none">
                  <path d="M28 15L36 23.5V15.5H43V30.5L48 36L46 38L28 19L10 38L8 35.5Z" />
                  <path d="M13 36L28 21.5L43 36V48H31.5V38H25V48H13Z" />
                </g>
              </Box>
              <Box><path d="M28.5 12L14 28L28.5 44M15 28H43" stroke="#5f5f5f" strokeWidth="8" strokeLinecap="round" strokeLinejoin="round" /></Box>
              <Box><path d="M27 12L41.5 28L27 44M12 28H40" stroke="#5f5f5f" strokeWidth="8" strokeLinecap="round" strokeLinejoin="round" /></Box>
              <ToolSeparator />
              <Box>
                <path d="M28 5L35.5 14H30.5V25.5H42V20L51 28L42 36V30.5H30.5V42H35.5L28 51L20.5 42H25.5V30.5H14V36L5 28L14 20V25.5H25.5V14H20.5Z" fill="#000" stroke="#000" />
              </Box>
              <Box>
                <circle cx="25" cy="25" r="15" stroke="#000" strokeWidth="6" />
                <path d="M35.5 35.5L46 46.5" stroke="#000" strokeWidth="7" strokeLinecap="round" />
              </Box>
              <Box>
                <path d="M8 13.5H48M8 29H48M8 43.5H48" stroke="#000" strokeWidth="4" />
                <g fill="#000" stroke="#262930" strokeWidth="2">
                  <rect x="15" y="7.5" width="12" height="12" rx="2" /><rect x="31" y="23" width="12" height="12" rx="2" />
                  <rect x="17" y="37.5" width="12" height="12" rx="2" />
                </g>
              </Box>
              <Box>
                <path d="M4 8V47H52" stroke="#000" strokeWidth="2.6" />
                <path d="M10 39L22 26L30 33L45 16" stroke="#000" strokeWidth="6" />
                <path d="M36 12H51V26Z" fill="#000" stroke="none" />
              </Box>
              <ToolSeparator />
              <Box>
                <path d="M11 9.5H35.5L46.5 19.5V46.5H9.5V11Z" stroke="#000" strokeWidth="3.4" strokeLinejoin="round" />
                <path d="M15 10V21Q15 24 18 24H31Q34 24 34 21V10ZM25.5 12.5H31V21.5H25.5Z" fill="#000" stroke="none" fillRule="evenodd" />
                <path d="M16.5 46V34.5Q16.5 32.5 18.5 32.5H38.5Q40 32.5 40 34.5V46" stroke="#000" strokeWidth="3.2" />
              </Box>
            </PlotTools>
            <Plot><Histogram /></Plot>
            <Section $after={12}>Shape spectrum</Section>
            <Section $after={14}>Geometry</Section>
            <WideButton>Measure</WideButton>
          </MeasurePanel>
        </RightDock>
      </Body>
      <StatusBar>
        <svg width="18" height="12" viewBox="0 0 18 12" fill={color.text}><path d="M9 0L18 9.5H0Z" /></svg>
        activity
      </StatusBar>
    </Window>
  );
}
